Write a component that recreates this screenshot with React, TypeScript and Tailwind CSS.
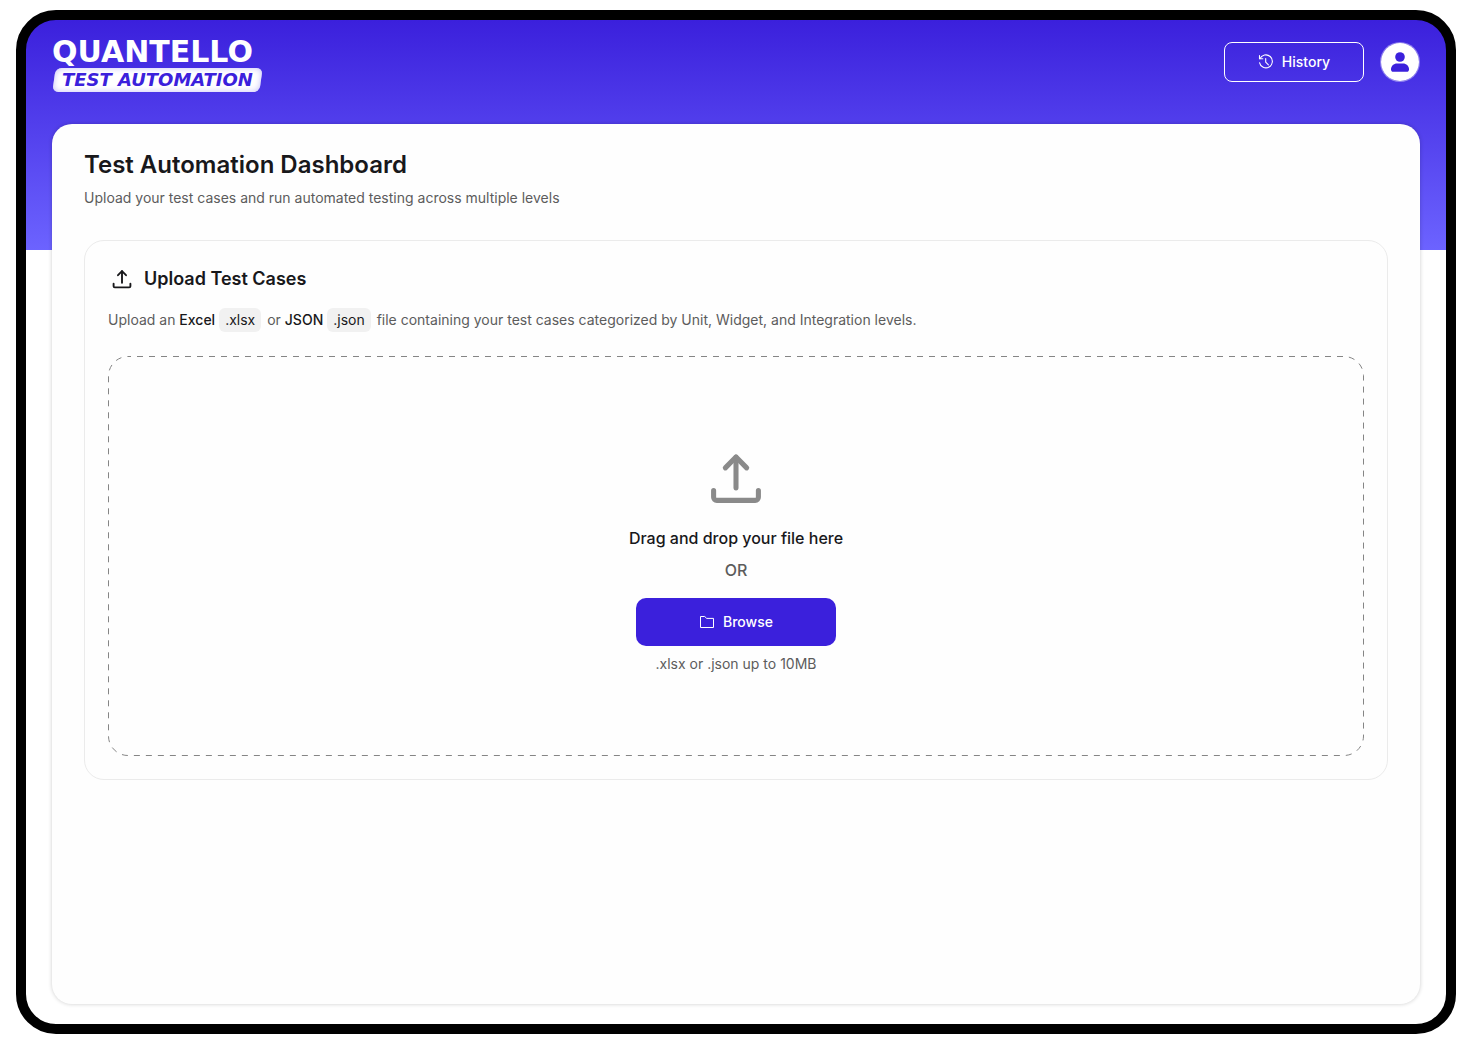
import { useRef, useState } from "react";

type IconProps = { className?: string };

function UploadIcon({ className }: IconProps) {
  return (
    <svg viewBox="0 0 24 24" fill="none" stroke="currentColor" strokeWidth="1.9" strokeLinecap="round" strokeLinejoin="round" className={className} aria-hidden="true">
      <path d="M12 15.7V4.2" />
      <path d="M8 8.2 12 4.1l4 4.1" />
      <path d="M3.6 16.7v2.5c0 .7.5 1.2 1.2 1.2h14.4c.7 0 1.2-.5 1.2-1.2v-2.5" />
    </svg>
  );
}

function HistoryIcon({ className }: IconProps) {
  return (
    <svg viewBox="0 0 16 16" fill="none" stroke="currentColor" strokeWidth="1.1" strokeLinecap="round" strokeLinejoin="round" className={className} aria-hidden="true">
      <path d="M1.500 1.500v3.300h3.300" />
      <path d="M1.900 4.800A6.500 6.500 0 1 1 1.500 8.700" />
      <path d="M7.700 4.500V8.200l2.700 2.700" />
    </svg>
  );
}

function FolderIcon({ className }: IconProps) {
  return (
    <svg viewBox="0 0 16 16" fill="none" stroke="currentColor" strokeWidth="1" strokeLinejoin="round" className={className} aria-hidden="true">
      <path d="M1.500 2.500h4.200l2 1.900h6.800v9.100h-13z" />
    </svg>
  );
}

function UserIcon({ className }: IconProps) {
  return (
    <svg viewBox="0 0 20 20" fill="currentColor" className={className} aria-hidden="true">
      <circle cx="10" cy="5" r="4.800" />
      <path d="M1 17.200C1 14 3.800 11.600 7 11.600h6c3.200 0 6 2.400 6 5.600 0 1.700-.8 2.600-2.400 2.600H3.400C1.800 19.800 1 18.900 1 17.200z" />
    </svg>
  );
}

function Logo() {
  return (
    <a href="#" className="flex flex-col items-start">
      <span className="font-['DejaVu_Sans',sans-serif] text-[30px] leading-6 font-bold text-white">QUANTELLO</span>
      <span className="relative mt-1 ml-0.5 flex h-6 items-center px-2">
        <span className="absolute inset-0 -skew-x-8 rounded-md bg-white shadow-[inset_0_0_6px_#c4bff8]" />
        <span className="relative font-['DejaVu_Sans',sans-serif] text-lg leading-6 font-bold text-[#3b20dc] italic">TEST AUTOMATION</span>
      </span>
    </a>
  );
}

function FileTag({ children }: { children: string }) {
  return <code className="mr-0.5 ml-1 inline-block rounded-md bg-[#f1f1f1] px-1.5 font-[Inter,sans-serif] text-sm leading-6 text-[#18181b]">{children}</code>;
}

export default function App() {
  const fileInput = useRef<HTMLInputElement>(null);
  const [file, setFile] = useState<File | null>(null);

  return (
    <div className="bg-white px-4 pt-2.5 pb-5 font-[Inter,sans-serif] text-[#18181b]">
      <div className="flex min-h-[calc(100vh-32px)] flex-col rounded-[40px] border-10 border-black bg-[linear-gradient(#3b20dc,#6c63ff)] bg-[length:100%_230px] bg-no-repeat px-[26px] pb-5">
        <header className="flex h-[104px] items-start justify-between pt-5">
          <Logo />
          <div className="flex items-center gap-4 pt-0.5">
            <button type="button" className="flex h-10 w-[140px] items-center justify-center gap-2 rounded-lg border border-white text-sm font-medium text-white">
              <HistoryIcon className="size-4" />
              History
            </button>
            <button type="button" aria-label="Account" className="flex size-10 items-center justify-center rounded-full border border-white/40 bg-white bg-clip-padding text-[#3b20dc]">
              <UserIcon className="size-5" />
            </button>
          </div>
        </header>

        <main className="flex-1 rounded-[20px] bg-[#fefefe] px-8 pt-6 pb-8 shadow-[0_0_4px_rgba(0,0,0,0.2)]">
          <h1 className="text-2xl leading-[34px] font-semibold">Test Automation Dashboard</h1>
          <p className="mt-1.5 text-sm text-[#5c5c5c]">Upload your test cases and run automated testing across multiple levels</p>

          <section className="mt-8 rounded-[20px] border border-[#ebebeb] p-[23px]">
            <div className="flex items-center gap-2">
              <span className="flex size-7 items-center justify-center">
                <UploadIcon className="size-6" />
              </span>
              <h2 className="text-lg leading-[30px] font-semibold">Upload Test Cases</h2>
            </div>
            <p className="mt-3.5 text-sm leading-6 text-[#5c5c5c]">
              Upload an <b className="font-medium text-[#18181b]">Excel</b>
              <FileTag>.xlsx</FileTag> or <b className="font-medium text-[#18181b]">JSON</b>
              <FileTag>.json</FileTag> file containing your test cases categorized by Unit, Widget, and Integration levels.
            </p>

            <div
              className="relative mt-6 flex h-[400px] flex-col items-center justify-center pt-2"
              onDragOver={(e) => e.preventDefault()}
              onDrop={(e) => {
                e.preventDefault();
                setFile(e.dataTransfer.files[0] ?? null);
              }}
            >
              {/* css dashes are too short, so the outline is drawn */}
              <svg className="pointer-events-none absolute inset-0 size-full" aria-hidden="true">
                <rect x="0.5" y="0.5" rx="19.5" fill="none" stroke="#858585" strokeDasharray="6 6" strokeDashoffset="3" className="h-[calc(100%-1px)] w-[calc(100%-1px)]" />
              </svg>
              <UploadIcon className="size-16 text-[#8a8a8a]" />
              <p className="mt-4 text-base font-medium">{file ? file.name : "Drag and drop your file here"}</p>
              <p className="mt-2 text-base font-medium text-[#5c5c5c]">OR</p>
              <button
                type="button"
                onClick={() => fileInput.current?.click()}
                className="mt-4 flex h-12 w-[200px] items-center justify-center gap-2 rounded-[10px] bg-[#3b20dc] text-sm font-medium text-white"
              >
                <FolderIcon className="size-4" />
                Browse
              </button>
              <input
                ref={fileInput}
                type="file"
                accept=".xlsx,.json"
                aria-label="Test case file"
                className="hidden"
                onChange={(e) => setFile(e.target.files?.[0] ?? null)}
              />
              <p className="mt-2 text-sm text-[#5c5c5c]">.xlsx or .json up to 10MB</p>
            </div>
          </section>
        </main>
      </div>
    </div>
  );
}
